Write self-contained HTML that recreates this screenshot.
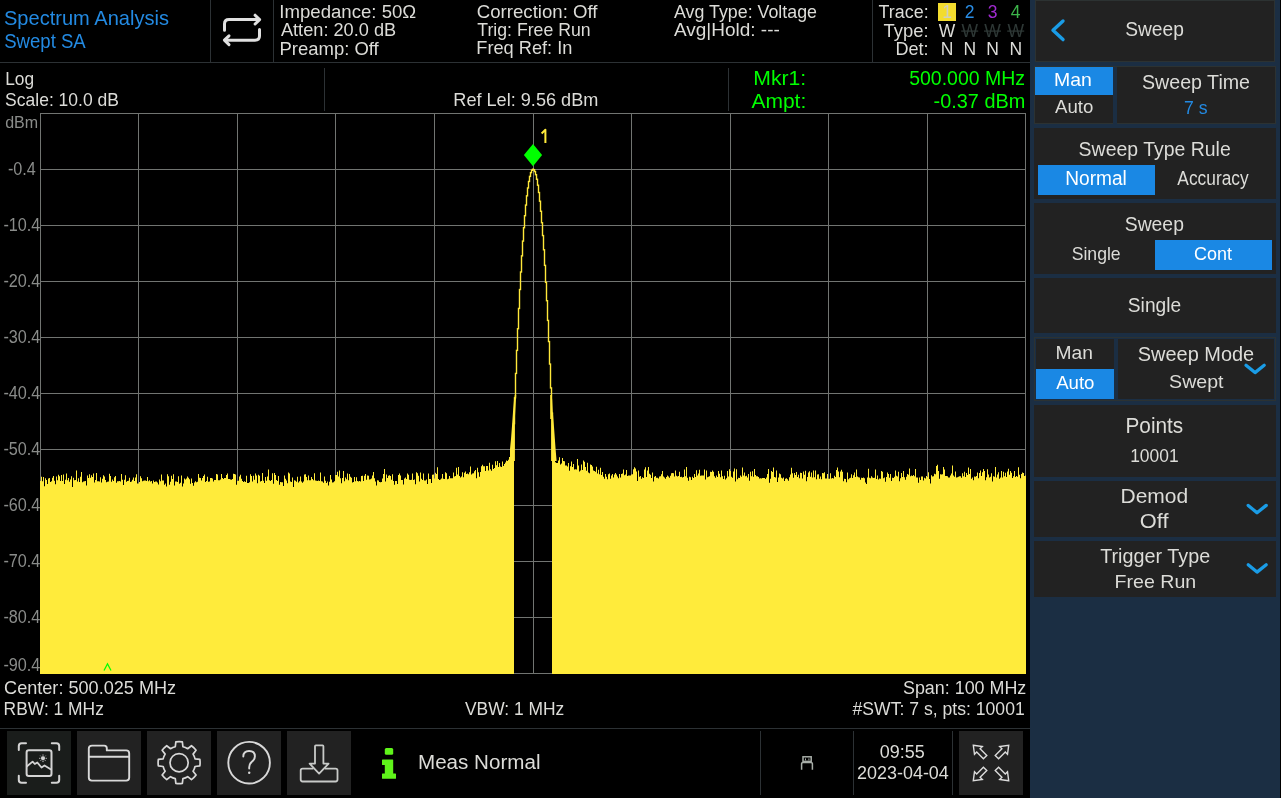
<!DOCTYPE html>
<html><head><meta charset="utf-8"><title>Spectrum Analysis - Swept SA</title>
<style>
html,body{margin:0;padding:0;background:#000;width:1281px;height:798px;overflow:hidden}
svg{display:block;will-change:transform}
text{font-family:"Liberation Sans",sans-serif}
</style></head><body>
<svg width="1281" height="798" viewBox="0 0 1281 798">
<rect x="0" y="0" width="1281" height="798" fill="#000"/>
<text x="4.00" y="25.00" font-size="20.06" fill="#238ae2" textLength="164.92" lengthAdjust="spacingAndGlyphs">Spectrum Analysis</text>
<text x="4.16" y="47.80" font-size="20.06" fill="#238ae2" textLength="81.58" lengthAdjust="spacingAndGlyphs">Swept SA</text>
<rect x="0" y="62" width="1030" height="1" fill="#2c3134"/>
<rect x="210" y="0" width="1" height="62" fill="#2c3134"/>
<rect x="273" y="0" width="1" height="62" fill="#2c3134"/>
<rect x="872" y="0" width="1" height="62" fill="#2c3134"/>
<g fill="none" stroke="#e0e0e0" stroke-width="3" stroke-linecap="round" stroke-linejoin="round"><path d="M224.5,30.3 V24 Q224.5,19.6 229,19.6 H258.5"/><path d="M255.1,15.2 L259.6,19.6 L255.1,24"/><path d="M259.5,29.5 V36 Q259.5,40.2 255,40.2 H225.5"/><path d="M229,35.8 L224.4,40.2 L229,44.6"/></g>
<text x="279.28" y="18.00" font-size="18.46" fill="#dcdcd8" textLength="137.02" lengthAdjust="spacingAndGlyphs">Impedance: 50Ω</text>
<text x="280.96" y="35.70" font-size="18.46" fill="#dcdcd8" textLength="115.19" lengthAdjust="spacingAndGlyphs">Atten: 20.0 dB</text>
<text x="279.49" y="54.90" font-size="18.46" fill="#dcdcd8" textLength="99.28" lengthAdjust="spacingAndGlyphs">Preamp: Off</text>
<text x="476.81" y="17.50" font-size="18.17" fill="#dcdcd8" textLength="120.67" lengthAdjust="spacingAndGlyphs">Correction: Off</text>
<text x="477.36" y="35.60" font-size="18.17" fill="#dcdcd8" textLength="113.18" lengthAdjust="spacingAndGlyphs">Trig: Free Run</text>
<text x="476.26" y="54.40" font-size="18.17" fill="#dcdcd8" textLength="96.18" lengthAdjust="spacingAndGlyphs">Freq Ref: In</text>
<text x="673.97" y="17.50" font-size="18.17" fill="#dcdcd8" textLength="143.06" lengthAdjust="spacingAndGlyphs">Avg Type: Voltage</text>
<text x="673.96" y="35.60" font-size="18.17" fill="#dcdcd8" textLength="105.88" lengthAdjust="spacingAndGlyphs">Avg|Hold: ---</text>
<text x="878.60" y="18.40" font-size="17.88" fill="#dcdcd8" textLength="50.01" lengthAdjust="spacingAndGlyphs">Trace:</text>
<text x="883.60" y="36.60" font-size="17.88" fill="#dcdcd8" textLength="45.05" lengthAdjust="spacingAndGlyphs">Type:</text>
<text x="895.52" y="54.60" font-size="17.88" fill="#dcdcd8" textLength="33.13" lengthAdjust="spacingAndGlyphs">Det:</text>
<rect x="938" y="3" width="18" height="18" fill="#f3dc2e"/>
<text x="947" y="18.4" font-size="17.5" fill="#cfcfbf" text-anchor="middle">1</text>
<text x="969.7" y="18.4" font-size="17.5" fill="#2a8ee6" text-anchor="middle">2</text>
<text x="992.5" y="18.4" font-size="17.5" fill="#a02ad0" text-anchor="middle">3</text>
<text x="1015.7" y="18.4" font-size="17.5" fill="#3cb54a" text-anchor="middle">4</text>
<text x="947" y="36.6" font-size="17.5" fill="#dcdcd8" text-anchor="middle">W</text>
<text x="969.7" y="36.6" font-size="17.5" fill="#2e3836" text-anchor="middle">W</text>
<rect x="961.2" y="30.5" width="17" height="1.2" fill="#2e3836"/>
<text x="992.5" y="36.6" font-size="17.5" fill="#2e3836" text-anchor="middle">W</text>
<rect x="984.0" y="30.5" width="17" height="1.2" fill="#2e3836"/>
<text x="1015.7" y="36.6" font-size="17.5" fill="#2e3836" text-anchor="middle">W</text>
<rect x="1007.2" y="30.5" width="17" height="1.2" fill="#2e3836"/>
<text x="947" y="54.6" font-size="17.5" fill="#dcdcd8" text-anchor="middle">N</text>
<text x="969.7" y="54.6" font-size="17.5" fill="#dcdcd8" text-anchor="middle">N</text>
<text x="992.5" y="54.6" font-size="17.5" fill="#dcdcd8" text-anchor="middle">N</text>
<text x="1015.7" y="54.6" font-size="17.5" fill="#dcdcd8" text-anchor="middle">N</text>
<text x="5.18" y="84.75" font-size="18.31" fill="#dcdcd8" textLength="28.94" lengthAdjust="spacingAndGlyphs">Log</text>
<text x="5.11" y="105.60" font-size="18.17" fill="#dcdcd8" textLength="113.82" lengthAdjust="spacingAndGlyphs">Scale: 10.0 dB</text>
<rect x="324" y="68" width="1" height="43" fill="#2c3134"/>
<rect x="728" y="68" width="1" height="43" fill="#2c3134"/>
<text x="453.31" y="106.00" font-size="18.60" fill="#dcdcd8" textLength="145.08" lengthAdjust="spacingAndGlyphs">Ref Lel: 9.56 dBm</text>
<text x="753.26" y="85.20" font-size="19.48" fill="#00ff00" textLength="52.97" lengthAdjust="spacingAndGlyphs">Mkr1:</text>
<text x="751.46" y="107.50" font-size="19.48" fill="#00ff00" textLength="54.76" lengthAdjust="spacingAndGlyphs">Ampt:</text>
<text x="909.22" y="84.50" font-size="19.48" fill="#00ff00" textLength="115.75" lengthAdjust="spacingAndGlyphs">500.000 MHz</text>
<text x="933.62" y="107.50" font-size="19.48" fill="#00ff00" textLength="91.69" lengthAdjust="spacingAndGlyphs">-0.37 dBm</text>
<path d="M40.5,113V674M138.5,113V674M237.5,113V674M335.5,113V674M434.5,113V674M533.5,113V674M631.5,113V674M730.5,113V674M828.5,113V674M927.5,113V674M1025.5,113V674M40,113.5H1026M40,169.5H1026M40,225.5H1026M40,281.5H1026M40,337.5H1026M40,393.5H1026M40,449.5H1026M40,505.5H1026M40,561.5H1026M40,617.5H1026M40,673.5H1026" stroke="#717471" stroke-width="1" fill="none"/>
<text x="5.13" y="127.90" font-size="16.57" fill="#8a8c8a" textLength="32.98" lengthAdjust="spacingAndGlyphs">dBm</text>
<text x="7.90" y="175.00" font-size="17.44" fill="#8a8c8a" textLength="27.95" lengthAdjust="spacingAndGlyphs">-0.4</text>
<text x="3.39" y="231.00" font-size="17.44" fill="#8a8c8a" textLength="36.97" lengthAdjust="spacingAndGlyphs">-10.4</text>
<text x="3.39" y="287.00" font-size="17.44" fill="#8a8c8a" textLength="36.97" lengthAdjust="spacingAndGlyphs">-20.4</text>
<text x="3.39" y="343.00" font-size="17.44" fill="#8a8c8a" textLength="36.97" lengthAdjust="spacingAndGlyphs">-30.4</text>
<text x="3.39" y="399.00" font-size="17.44" fill="#8a8c8a" textLength="36.97" lengthAdjust="spacingAndGlyphs">-40.4</text>
<text x="3.39" y="455.00" font-size="17.44" fill="#8a8c8a" textLength="36.97" lengthAdjust="spacingAndGlyphs">-50.4</text>
<text x="3.39" y="511.00" font-size="17.44" fill="#8a8c8a" textLength="36.97" lengthAdjust="spacingAndGlyphs">-60.4</text>
<text x="3.39" y="567.00" font-size="17.44" fill="#8a8c8a" textLength="36.97" lengthAdjust="spacingAndGlyphs">-70.4</text>
<text x="3.39" y="623.00" font-size="17.44" fill="#8a8c8a" textLength="36.97" lengthAdjust="spacingAndGlyphs">-80.4</text>
<text x="3.39" y="670.50" font-size="17.44" fill="#8a8c8a" textLength="36.97" lengthAdjust="spacingAndGlyphs">-90.4</text>
<path d="M40,674V481.1H41V476.7H42V481.3H43V477.1H44V486.2H45V478.2H46V480.1H47V484.1H48V478.4H49V478.1H50V481.9H51V481.2H52V477.7H53V476.0H54V480.8H55V484.2H56V476.6H57V480.3H58V474.7H59V476.2H60V480.9H61V475.0H62V481.0H63V474.4H64V484.1H65V479.7H66V473.4H67V480.2H68V478.0H69V481.8H70V479.5H71V476.2H72V486.9H73V477.8H74V480.3H75V480.1H76V470.4H77V481.6H78V478.3H79V482.0H80V476.8H81V471.9H82V482.3H83V481.5H84V481.3H85V481.1H86V485.4H87V475.4H88V478.0H89V474.2H90V477.7H91V475.2H92V477.1H93V473.5H94V482.6H95V479.9H96V472.9H97V481.2H98V481.3H99V481.5H100V477.2H101V482.6H102V478.8H103V475.3H104V476.4H105V480.1H106V482.2H107V481.7H108V481.5H109V473.7H110V476.1H111V481.7H112V479.6H113V480.9H114V477.3H115V476.1H116V482.7H117V481.2H118V481.3H119V481.0H120V481.4H121V473.9H122V479.8H123V484.9H124V479.7H125V475.2H126V481.7H127V481.1H128V480.8H129V477.8H130V481.9H131V481.5H132V479.8H133V477.5H134V481.0H135V477.4H136V474.3H137V483.6H138V483.5H139V482.1H140V476.3H141V478.3H142V481.2H143V480.8H144V480.4H145V480.5H146V481.0H147V477.0H148V481.2H149V480.3H150V481.6H151V481.1H152V483.5H153V480.5H154V482.1H155V481.4H156V481.4H157V482.5H158V484.6H159V479.6H160V481.3H161V474.4H162V480.5H163V480.5H164V484.8H165V483.5H166V486.5H167V474.3H168V476.3H169V484.7H170V481.7H171V475.8H172V479.1H173V474.2H174V485.5H175V481.5H176V481.6H177V482.1H178V476.2H179V483.7H180V482.7H181V475.5H182V486.4H183V483.4H184V478.5H185V479.4H186V478.4H187V476.4H188V477.8H189V479.2H190V483.8H191V478.4H192V482.9H193V485.7H194V482.4H195V481.3H196V482.2H197V481.8H198V473.9H199V477.8H200V478.0H201V480.4H202V478.0H203V476.0H204V474.5H205V482.0H206V481.1H207V476.8H208V481.8H209V481.5H210V477.9H211V478.0H212V478.4H213V481.6H214V479.9H215V480.0H216V474.0H217V474.5H218V480.3H219V480.2H220V479.4H221V474.0H222V478.0H223V478.9H224V478.0H225V478.1H226V474.9H227V473.5H228V478.9H229V479.0H230V479.4H231V479.8H232V479.0H233V473.7H234V474.1H235V474.6H236V484.8H237V480.9H238V480.8H239V476.4H240V474.8H241V478.7H242V481.0H243V482.1H244V481.2H245V481.9H246V475.8H247V483.1H248V483.0H249V482.2H250V474.2H251V475.9H252V481.5H253V475.8H254V479.7H255V473.5H256V475.4H257V483.3H258V474.8H259V475.7H260V481.5H261V480.9H262V473.1H263V480.8H264V483.0H265V477.1H266V480.7H267V476.5H268V469.6H269V480.3H270V481.1H271V479.9H272V473.3H273V483.7H274V473.0H275V475.1H276V479.9H277V480.9H278V475.9H279V484.8H280V482.1H281V482.2H282V482.2H283V486.0H284V475.5H285V478.8H286V480.4H287V483.2H288V472.5H289V473.4H290V481.4H291V482.0H292V477.6H293V487.1H294V480.2H295V480.8H296V481.7H297V476.7H298V482.5H299V481.3H300V476.4H301V481.6H302V482.7H303V481.6H304V474.4H305V474.3H306V477.0H307V480.2H308V475.6H309V480.3H310V480.2H311V477.1H312V478.9H313V480.3H314V473.2H315V480.5H316V480.7H317V481.0H318V480.4H319V481.0H320V472.6H321V481.2H322V481.6H323V482.8H324V476.5H325V480.7H326V482.9H327V481.4H328V485.5H329V481.8H330V475.1H331V479.5H332V482.5H333V482.2H334V481.3H335V474.9H336V475.1H337V471.8H338V476.4H339V470.5H340V478.3H341V483.3H342V478.1H343V470.9H344V481.3H345V477.5H346V479.3H347V473.5H348V480.3H349V473.9H350V476.8H351V477.8H352V482.6H353V481.9H354V477.0H355V481.2H356V477.3H357V481.1H358V481.4H359V480.9H360V481.4H361V475.9H362V475.8H363V480.9H364V475.8H365V474.1H366V479.8H367V475.4H368V475.7H369V479.4H370V479.2H371V478.5H372V475.4H373V472.0H374V478.2H375V481.6H376V485.5H377V480.2H378V480.5H379V482.0H380V482.2H381V482.1H382V478.6H383V474.1H384V469.1H385V481.4H386V474.5H387V478.0H388V475.7H389V475.2H390V476.1H391V479.7H392V474.2H393V481.0H394V484.7H395V480.9H396V481.1H397V483.9H398V475.0H399V473.6H400V475.6H401V479.9H402V480.0H403V484.6H404V478.6H405V477.6H406V478.9H407V473.6H408V474.8H409V479.8H410V480.1H411V479.8H412V473.5H413V479.9H414V479.5H415V484.2H416V472.3H417V473.3H418V475.7H419V481.5H420V472.4H421V478.8H422V480.0H423V473.6H424V480.4H425V480.6H426V479.6H427V484.1H428V473.5H429V479.1H430V479.1H431V482.9H432V474.8H433V474.6H434V478.6H435V472.7H436V473.9H437V467.2H438V479.0H439V479.9H440V479.5H441V478.4H442V474.0H443V478.7H444V479.0H445V472.2H446V473.3H447V479.3H448V478.7H449V476.1H450V478.3H451V478.3H452V478.2H453V472.4H454V476.6H455V476.0H456V467.7H457V474.5H458V467.1H459V475.9H460V477.6H461V476.5H462V472.2H463V477.2H464V472.8H465V471.4H466V474.0H467V473.6H468V474.3H469V472.2H470V466.4H471V474.4H472V473.6H473V473.2H474V471.3H475V470.0H476V478.2H477V467.8H478V472.2H479V476.7H480V471.9H481V466.3H482V464.7H483V466.3H484V466.3H485V471.0H486V465.9H487V466.0H488V470.4H489V462.8H490V469.2H491V470.8H492V464.8H493V469.0H494V468.0H495V461.3H496V465.3H497V461.1H498V467.0H499V462.9H500V466.4H501V467.1H502V461.6H503V466.1H504V464.0H505V462.4H506V460.6H507V461.1H508V459.7H509V456.9H510V459.7H511V456.6H512V453.0H513V458.0H514V674H552V459.5H553V459.0H554V451.3H555V462.3H556V463.0H557V462.9H558V460.6H559V457.3H560V464.4H561V463.4H562V458.0H563V461.0H564V461.3H565V465.6H566V465.4H567V466.5H568V463.1H569V470.8H570V466.3H571V461.6H572V466.9H573V463.9H574V469.5H575V469.2H576V469.4H577V459.0H578V465.6H579V471.4H580V470.5H581V464.4H582V470.0H583V460.5H584V461.8H585V467.1H586V470.7H587V462.7H588V472.5H589V473.2H590V464.6H591V465.1H592V466.6H593V470.5H594V471.1H595V471.7H596V466.7H597V473.4H598V469.8H599V474.2H600V467.7H601V475.0H602V472.1H603V476.7H604V478.7H605V474.0H606V476.7H607V479.2H608V474.3H609V473.4H610V478.8H611V475.5H612V474.1H613V477.5H614V474.5H615V472.9H616V474.5H617V476.6H618V478.3H619V474.1H620V477.5H621V474.1H622V473.5H623V469.5H624V475.2H625V474.5H626V469.9H627V476.0H628V475.5H629V475.5H630V475.4H631V474.6H632V474.3H633V469.2H634V467.2H635V468.6H636V471.4H637V480.9H638V470.4H639V476.8H640V476.0H641V478.7H642V477.2H643V477.9H644V469.4H645V467.3H646V477.1H647V470.5H648V467.0H649V473.7H650V474.8H651V477.9H652V472.6H653V481.5H654V476.7H655V476.0H656V477.7H657V477.8H658V478.4H659V476.4H660V476.2H661V474.3H662V470.9H663V476.4H664V477.4H665V478.7H666V477.0H667V475.4H668V476.4H669V477.8H670V475.8H671V473.3H672V472.9H673V473.3H674V476.5H675V470.4H676V475.7H677V476.4H678V476.0H679V471.7H680V476.9H681V476.8H682V477.6H683V477.0H684V469.5H685V476.2H686V467.0H687V477.7H688V480.8H689V476.8H690V477.3H691V480.1H692V476.7H693V477.9H694V474.0H695V476.9H696V470.3H697V475.4H698V473.4H699V469.7H700V475.8H701V475.6H702V475.4H703V475.4H704V469.6H705V479.6H706V470.6H707V477.2H708V476.8H709V476.3H710V471.8H711V472.0H712V470.5H713V471.7H714V476.2H715V477.7H716V475.5H717V477.0H718V470.9H719V473.7H720V477.2H721V470.4H722V476.2H723V479.1H724V475.8H725V479.5H726V478.3H727V471.0H728V476.5H729V469.2H730V471.1H731V476.8H732V477.7H733V471.6H734V468.5H735V481.6H736V469.2H737V479.3H738V477.8H739V478.1H740V475.4H741V476.8H742V467.5H743V475.5H744V472.4H745V476.2H746V475.8H747V477.4H748V474.0H749V480.8H750V471.7H751V476.2H752V471.2H753V476.7H754V469.0H755V475.1H756V476.3H757V476.3H758V476.9H759V478.4H760V478.3H761V478.6H762V477.9H763V477.9H764V477.9H765V478.9H766V477.5H767V474.1H768V469.1H769V482.7H770V478.7H771V471.1H772V472.0H773V467.5H774V477.1H775V477.4H776V470.4H777V481.9H778V477.5H779V473.4H780V474.2H781V477.7H782V478.4H783V477.5H784V481.0H785V478.7H786V478.3H787V479.2H788V480.7H789V477.3H790V474.5H791V467.8H792V473.2H793V477.7H794V473.1H795V474.9H796V472.1H797V477.0H798V474.8H799V478.3H800V472.8H801V472.9H802V478.4H803V471.6H804V474.8H805V470.7H806V481.2H807V477.0H808V472.6H809V471.2H810V476.8H811V472.6H812V477.6H813V470.6H814V477.3H815V470.6H816V479.2H817V474.6H818V474.3H819V478.8H820V476.5H821V479.2H822V472.9H823V473.3H824V472.2H825V478.5H826V478.5H827V473.9H828V478.8H829V478.7H830V473.2H831V478.4H832V478.0H833V478.4H834V475.7H835V477.1H836V470.0H837V467.5H838V471.6H839V477.2H840V471.6H841V469.7H842V471.7H843V481.3H844V478.7H845V479.1H846V482.2H847V472.5H848V479.3H849V478.3H850V477.8H851V474.3H852V478.1H853V475.3H854V472.6H855V477.1H856V469.6H857V476.4H858V477.2H859V477.5H860V479.8H861V477.8H862V478.0H863V477.4H864V478.2H865V482.5H866V483.9H867V477.6H868V468.7H869V477.8H870V478.3H871V476.2H872V477.6H873V477.9H874V477.7H875V469.6H876V478.9H877V475.5H878V479.6H879V478.4H880V478.7H881V471.1H882V471.8H883V478.3H884V477.4H885V481.8H886V477.0H887V472.6H888V474.0H889V477.8H890V474.1H891V480.9H892V477.8H893V477.9H894V476.8H895V470.6H896V475.7H897V476.6H898V471.8H899V481.2H900V478.2H901V472.9H902V476.9H903V471.1H904V477.3H905V479.7H906V476.7H907V474.0H908V474.7H909V468.4H910V476.3H911V475.6H912V476.1H913V475.1H914V476.2H915V468.9H916V477.5H917V477.4H918V482.7H919V477.6H920V480.1H921V476.4H922V476.4H923V480.4H924V477.7H925V478.4H926V476.1H927V476.9H928V472.3H929V478.9H930V483.4H931V475.2H932V476.6H933V476.3H934V473.7H935V474.2H936V465.9H937V464.7H938V471.1H939V478.7H940V474.2H941V474.5H942V474.3H943V466.9H944V469.5H945V476.1H946V476.0H947V476.3H948V477.6H949V477.4H950V475.4H951V473.6H952V465.6H953V475.5H954V476.8H955V471.4H956V477.6H957V477.3H958V476.8H959V476.3H960V476.3H961V477.7H962V473.3H963V476.2H964V471.8H965V476.9H966V473.1H967V475.0H968V467.5H969V473.9H970V469.1H971V478.8H972V477.5H973V480.2H974V476.4H975V476.7H976V475.9H977V472.6H978V478.3H979V473.1H980V470.4H981V476.1H982V472.3H983V469.0H984V470.9H985V480.3H986V477.2H987V469.2H988V474.4H989V477.4H990V476.7H991V473.3H992V481.5H993V476.3H994V476.8H995V466.9H996V477.4H997V474.4H998V472.3H999V478.8H1000V477.4H1001V471.0H1002V477.6H1003V471.8H1004V476.2H1005V472.8H1006V477.1H1007V471.5H1008V468.7H1009V474.8H1010V471.1H1011V472.7H1012V477.9H1013V476.3H1014V471.1H1015V476.9H1016V476.0H1017V476.7H1018V467.2H1019V474.8H1020V478.2H1021V473.9H1022V472.4H1023V472.9H1024V476.0H1025V475.5H1026V674Z" fill="#ffeb3b"/>
<g fill="#ffe83a"><rect x="511.80" y="450.15" width="1.4" height="12.55"/><rect x="512.80" y="422.96" width="1.4" height="28.59"/><rect x="513.80" y="397.16" width="1.4" height="27.21"/><rect x="514.80" y="372.73" width="1.4" height="25.83"/><rect x="515.80" y="349.68" width="1.4" height="24.45"/><rect x="516.80" y="328.02" width="1.4" height="23.07"/><rect x="517.80" y="307.73" width="1.4" height="21.69"/><rect x="518.80" y="288.83" width="1.4" height="20.31"/><rect x="519.80" y="271.30" width="1.4" height="18.93"/><rect x="520.80" y="255.15" width="1.4" height="17.55"/><rect x="521.80" y="240.39" width="1.4" height="16.17"/><rect x="522.80" y="227.00" width="1.4" height="14.79"/><rect x="523.80" y="215.00" width="1.4" height="13.41"/><rect x="524.80" y="204.37" width="1.4" height="12.03"/><rect x="525.80" y="195.12" width="1.4" height="10.65"/><rect x="526.80" y="187.26" width="1.4" height="9.27"/><rect x="527.80" y="180.77" width="1.4" height="7.89"/><rect x="528.80" y="175.67" width="1.4" height="6.51"/><rect x="529.80" y="171.94" width="1.4" height="5.13"/><rect x="530.80" y="169.59" width="1.4" height="3.75"/><rect x="531.80" y="168.63" width="1.4" height="2.37"/><rect x="532.80" y="168.60" width="1.4" height="1.84"/><rect x="533.80" y="169.04" width="1.4" height="3.19"/><rect x="534.80" y="170.84" width="1.4" height="4.57"/><rect x="535.80" y="174.01" width="1.4" height="5.95"/><rect x="536.80" y="178.56" width="1.4" height="7.33"/><rect x="537.80" y="184.50" width="1.4" height="8.71"/><rect x="538.80" y="191.81" width="1.4" height="10.09"/><rect x="539.80" y="200.51" width="1.4" height="11.47"/><rect x="540.80" y="210.58" width="1.4" height="12.85"/><rect x="541.80" y="222.03" width="1.4" height="14.23"/><rect x="542.80" y="234.87" width="1.4" height="15.61"/><rect x="543.80" y="249.08" width="1.4" height="16.99"/><rect x="544.80" y="264.68" width="1.4" height="18.37"/><rect x="545.80" y="281.65" width="1.4" height="19.75"/><rect x="546.80" y="300.00" width="1.4" height="21.13"/><rect x="547.80" y="319.74" width="1.4" height="22.51"/><rect x="548.80" y="340.85" width="1.4" height="23.89"/><rect x="549.80" y="363.35" width="1.4" height="25.27"/><rect x="550.80" y="387.22" width="1.4" height="26.65"/><rect x="551.80" y="412.47" width="1.4" height="28.03"/><rect x="552.80" y="439.11" width="1.4" height="23.59"/></g>
<polygon fill="#ffe83a" points="516.2,395 514.9,418 514.9,461 510,461 510,449 511,439 512,426 513.2,409 514,400 514.8,395"/>
<polygon fill="#ffe83a" points="550.2,395 550.2,419 551.1,419 551.1,461 556.6,461 555.5,448 554,427 552.8,412 552.2,400 551.7,395"/>
<polygon points="533,143.9 542.1,155.1 533,166.3 523.9,155.1" fill="#00ff00"/>
<path d="M545.4,143 V129.8 L541.6,133.4" fill="none" stroke="#ffeb3b" stroke-width="2" stroke-linejoin="round"/>
<polyline points="104,670.5 107.5,663.8 111,670.5" fill="none" stroke="#00ff00" stroke-width="1.3"/>
<text x="4.08" y="693.50" font-size="18.17" fill="#dcdcd8" textLength="172.02" lengthAdjust="spacingAndGlyphs">Center: 500.025 MHz</text>
<text x="3.58" y="714.50" font-size="17.59" fill="#dcdcd8" textLength="100.29" lengthAdjust="spacingAndGlyphs">RBW: 1 MHz</text>
<text x="464.92" y="714.60" font-size="18.46" fill="#dcdcd8" textLength="99.44" lengthAdjust="spacingAndGlyphs">VBW: 1 MHz</text>
<text x="902.99" y="693.50" font-size="17.88" fill="#dcdcd8" textLength="123.30" lengthAdjust="spacingAndGlyphs">Span: 100 MHz</text>
<text x="852.52" y="714.60" font-size="17.73" fill="#dcdcd8" textLength="172.23" lengthAdjust="spacingAndGlyphs">#SWT: 7 s, pts: 10001</text>
<rect x="0" y="728" width="1030" height="1" fill="#2c3134"/>
<rect x="7" y="731" width="64" height="64" fill="#1a1d1b"/>
<rect x="77" y="731" width="64" height="64" fill="#222222"/>
<rect x="147" y="731" width="64" height="64" fill="#222222"/>
<rect x="217" y="731" width="64" height="64" fill="#222222"/>
<rect x="287" y="731" width="64" height="64" fill="#222222"/>
<g transform="translate(7,731)" fill="none" stroke="#d4d4d4" stroke-width="2" stroke-linecap="round" stroke-linejoin="round"><path d="M11.8,19 V15 Q11.8,12.2 14.6,12.2 H19"/><path d="M44.8,12.2 H49.4 Q52.2,12.2 52.2,15 V19"/><path d="M11.8,44.8 V49 Q11.8,51.8 14.6,51.8 H19"/><path d="M44.8,51.8 H49.4 Q52.2,51.8 52.2,49 V44.8"/><rect x="19.6" y="19.2" width="24.9" height="25.7" rx="2.2"/><path d="M20,35.3 L25.6,30.6 L27.8,33 L30.3,31.5 L34.5,36.5 L37.5,34.4 L44,38.4" stroke-width="1.8"/></g>
<g transform="translate(7,731)" stroke="#d4d4d4" stroke-width="1" fill="none"><circle cx="36" cy="27.3" r="1.6" fill="#d4d4d4"/><path d="M36,23.5V24.6M36,30V31.1M32.2,27.3H33.3M38.7,27.3H39.8M33.4,24.7l0.7,0.7M37.9,29.2l0.7,0.7M38.6,24.7l-0.7,0.7M34.1,29.2l-0.7,0.7"/></g>
<g transform="translate(77,731)" fill="none" stroke="#d8d8d8" stroke-width="1.9" stroke-linejoin="round"><path d="M15,14.6 H27.2 Q29.8,14.6 29.8,17.2 V19.4 H49.2 Q52.2,19.4 52.2,22.4 V46.6 Q52.2,49.6 49.2,49.6 H14.8 Q11.8,49.6 11.8,46.6 V17.6 Q11.8,14.6 15,14.6 Z"/><path d="M11.8,25.8 H52.2"/></g>
<g transform="translate(147,731)" fill="none" stroke="#d8d8d8" stroke-width="1.7" stroke-linejoin="round"><path d="M28.28,15.75L28.86,10.95A21.0,21.0 0 0 1 35.34,10.95L35.92,15.75A16.4,16.4 0 0 1 40.68,17.72L44.48,14.74A21.0,21.0 0 0 1 49.06,19.32L46.08,23.12A16.4,16.4 0 0 1 48.05,27.88L52.85,28.46A21.0,21.0 0 0 1 52.85,34.94L48.05,35.52A16.4,16.4 0 0 1 46.08,40.28L49.06,44.08A21.0,21.0 0 0 1 44.48,48.66L40.68,45.68A16.4,16.4 0 0 1 35.92,47.65L35.34,52.45A21.0,21.0 0 0 1 28.86,52.45L28.28,47.65A16.4,16.4 0 0 1 23.52,45.68L19.72,48.66A21.0,21.0 0 0 1 15.14,44.08L18.12,40.28A16.4,16.4 0 0 1 16.15,35.52L11.35,34.94A21.0,21.0 0 0 1 11.35,28.46L16.15,27.88A16.4,16.4 0 0 1 18.12,23.12L15.14,19.32A21.0,21.0 0 0 1 19.72,14.74L23.52,17.72A16.4,16.4 0 0 1 28.28,15.75Z"/><circle cx="32.1" cy="31.7" r="9.1"/></g>
<g transform="translate(217,731)" fill="none" stroke="#d8d8d8" stroke-width="1.9" stroke-linecap="round"><circle cx="32.1" cy="31.7" r="20.8"/><path d="M26.3,25.6 Q26.3,20 32.1,20 Q37.9,20 37.9,25.4 Q37.9,28.4 34.6,31 Q32.2,33 32.2,36.2 V37.6"/><circle cx="32.2" cy="41.8" r="1.2" fill="#d8d8d8" stroke="none"/></g>
<g transform="translate(287,731)" fill="none" stroke="#c8cac8" stroke-width="1.8" stroke-linejoin="round"><path d="M26.4,37.6 H15.6 Q13.7,37.6 13.7,39.5 V48.6 Q13.7,50.5 15.6,50.5 H48.6 Q50.5,50.5 50.5,48.6 V39.5 Q50.5,37.6 48.6,37.6 H37.8"/><path d="M28,32.6 V15.2 Q28,14.4 28.8,14.4 H35.6 Q36.4,14.4 36.4,15.2 V32.6 H41.6 L32.1,42.6 L22.6,32.6 Z"/></g>
<g fill="#5ff41a"><rect x="384.8" y="748" width="8.4" height="6.8" rx="1.5"/><path d="M383.4,759.5 H392.6 Q393.2,759.5 393.2,760.1 V773.4 H395.4 Q396,773.4 396,774 V778.2 Q396,778.8 395.4,778.8 H382.6 Q382,778.8 382,778.2 V774 Q382,773.4 382.6,773.4 H384.8 V765 H382.6 Q382,765 382,764.4 V760.1 Q382,759.5 382.6,759.5 Z"/></g>
<text x="418.01" y="769.10" font-size="20.35" fill="#dcdcd8" textLength="122.47" lengthAdjust="spacingAndGlyphs">Meas Normal</text>
<rect x="760" y="731" width="1" height="64" fill="#2c3134"/>
<rect x="853" y="731" width="1" height="64" fill="#2c3134"/>
<rect x="952" y="731" width="1" height="64" fill="#2c3134"/>
<g fill="none" stroke="#a8aea8" stroke-width="1.5"><rect x="803" y="756.8" width="8.2" height="4.6"/><path d="M801.6,769.8 V763.8 Q801.6,762.4 803,762.4 H811 Q812.4,762.4 812.4,763.8 V769.8"/></g><g fill="#a8aea8"><rect x="805" y="758.4" width="1" height="2"/><rect x="808.4" y="758.4" width="1" height="2"/></g>
<text x="879.80" y="757.80" font-size="18.46" fill="#dcdcd8" textLength="44.96" lengthAdjust="spacingAndGlyphs">09:55</text>
<text x="857.00" y="778.80" font-size="18.46" fill="#dcdcd8" textLength="91.83" lengthAdjust="spacingAndGlyphs">2023-04-04</text>
<rect x="959" y="731" width="64" height="64" fill="#222222"/>
<g transform="translate(959,731)" fill="none" stroke="#dcdcdc" stroke-width="1.4" stroke-linejoin="miter"><path d="M14.3,14.3 L23.3,15.5 L21.1,17.7 L27.8,24.4 L24.4,27.8 L17.7,21.1 L15.5,23.3 Z"/><path d="M14.3,14.3 L23.3,15.5 L21.1,17.7 L27.8,24.4 L24.4,27.8 L17.7,21.1 L15.5,23.3 Z" transform="rotate(90 32 32)"/><path d="M14.3,14.3 L23.3,15.5 L21.1,17.7 L27.8,24.4 L24.4,27.8 L17.7,21.1 L15.5,23.3 Z" transform="rotate(180 32 32)"/><path d="M14.3,14.3 L23.3,15.5 L21.1,17.7 L27.8,24.4 L24.4,27.8 L17.7,21.1 L15.5,23.3 Z" transform="rotate(270 32 32)"/></g>
<rect x="1030" y="0" width="250" height="798" fill="#1b2e43"/>
<rect x="1280" y="0" width="1" height="798" fill="#000"/>
<rect x="1035" y="0" width="240" height="62" fill="#2c3232"/>
<rect x="1036" y="1" width="238" height="60" fill="#222222"/>
<path d="M1063,21 L1053,30.3 L1063,39.6" fill="none" stroke="#1a9ce6" stroke-width="3.4" stroke-linecap="round" stroke-linejoin="round"/>
<text x="1125.13" y="35.90" font-size="20.06" fill="#dcdcd8" textLength="58.68" lengthAdjust="spacingAndGlyphs">Sweep</text>
<rect x="1034" y="66" width="242" height="58" fill="#2c3232"/>
<rect x="1035" y="67" width="240" height="56" fill="#222222"/>
<rect x="1035" y="67" width="78" height="28" fill="#1a88e4"/>
<rect x="1113" y="67" width="4" height="57" fill="#1b2e43"/>
<text x="1054.10" y="86.00" font-size="18.17" fill="#ffffff" textLength="37.86" lengthAdjust="spacingAndGlyphs">Man</text>
<text x="1055.06" y="113.40" font-size="18.02" fill="#dcdcd8" textLength="38.32" lengthAdjust="spacingAndGlyphs">Auto</text>
<text x="1141.92" y="88.90" font-size="19.62" fill="#dcdcd8" textLength="108.15" lengthAdjust="spacingAndGlyphs">Sweep Time</text>
<text x="1184.00" y="113.80" font-size="19.04" fill="#238ae2" textLength="23.54" lengthAdjust="spacingAndGlyphs">7 s</text>
<rect x="1034" y="128" width="242" height="71" fill="#222222"/>
<rect x="1038" y="165" width="117" height="30" fill="#1a88e4"/>
<text x="1078.62" y="156.10" font-size="19.91" fill="#dcdcd8" textLength="152.13" lengthAdjust="spacingAndGlyphs">Sweep Type Rule</text>
<text x="1065.33" y="184.80" font-size="19.33" fill="#ffffff" textLength="61.54" lengthAdjust="spacingAndGlyphs">Normal</text>
<text x="1177.37" y="184.80" font-size="19.33" fill="#dcdcd8" textLength="71.27" lengthAdjust="spacingAndGlyphs">Accuracy</text>
<rect x="1034" y="203" width="242" height="71" fill="#222222"/>
<rect x="1155" y="240" width="117" height="30" fill="#1a88e4"/>
<text x="1124.72" y="231.10" font-size="19.91" fill="#dcdcd8" textLength="59.19" lengthAdjust="spacingAndGlyphs">Sweep</text>
<text x="1071.70" y="259.80" font-size="18.60" fill="#dcdcd8" textLength="48.98" lengthAdjust="spacingAndGlyphs">Single</text>
<text x="1193.99" y="259.80" font-size="18.60" fill="#ffffff" textLength="37.94" lengthAdjust="spacingAndGlyphs">Cont</text>
<rect x="1034" y="278" width="242" height="55" fill="#222222"/>
<text x="1127.83" y="312.10" font-size="20.93" fill="#dcdcd8" textLength="53.32" lengthAdjust="spacingAndGlyphs">Single</text>
<rect x="1034" y="337" width="242" height="64" fill="#2c3232"/>
<rect x="1035" y="338" width="240" height="62" fill="#222222"/>
<rect x="1035" y="338" width="240" height="62" fill="#1b2e43"/>
<rect x="1036" y="339" width="78" height="60" fill="#222222"/>
<rect x="1036" y="369" width="78" height="30" fill="#1a88e4"/>
<rect x="1118" y="339" width="156" height="60" fill="#222222"/>
<text x="1055.42" y="359.10" font-size="18.46" fill="#dcdcd8" textLength="37.43" lengthAdjust="spacingAndGlyphs">Man</text>
<text x="1056.16" y="389.10" font-size="18.60" fill="#ffffff" textLength="38.32" lengthAdjust="spacingAndGlyphs">Auto</text>
<text x="1137.79" y="361.00" font-size="19.91" fill="#dcdcd8" textLength="116.39" lengthAdjust="spacingAndGlyphs">Sweep Mode</text>
<text x="1169.11" y="388.00" font-size="18.31" fill="#dcdcd8" textLength="54.43" lengthAdjust="spacingAndGlyphs">Swept</text>
<path d="M1246,365.2 L1255,372.6 L1264.2,365.2" fill="none" stroke="#1a9ce6" stroke-width="3.3" stroke-linecap="round" stroke-linejoin="round"/>
<rect x="1034" y="405" width="242" height="72" fill="#222222"/>
<text x="1125.50" y="433.10" font-size="21.22" fill="#dcdcd8" textLength="57.76" lengthAdjust="spacingAndGlyphs">Points</text>
<text x="1130.17" y="461.80" font-size="19.19" fill="#dcdcd8" textLength="48.48" lengthAdjust="spacingAndGlyphs">10001</text>
<rect x="1034" y="481" width="242" height="56" fill="#222222"/>
<text x="1120.48" y="503.10" font-size="20.64" fill="#dcdcd8" textLength="67.68" lengthAdjust="spacingAndGlyphs">Demod</text>
<text x="1139.88" y="527.50" font-size="20.78" fill="#dcdcd8" textLength="28.69" lengthAdjust="spacingAndGlyphs">Off</text>
<path d="M1248.2,505.4 L1257,512.8 L1266.2,505.4" fill="none" stroke="#1a9ce6" stroke-width="3.3" stroke-linecap="round" stroke-linejoin="round"/>
<rect x="1034" y="541" width="242" height="56" fill="#222222"/>
<text x="1100.16" y="562.90" font-size="20.49" fill="#dcdcd8" textLength="110.00" lengthAdjust="spacingAndGlyphs">Trigger Type</text>
<text x="1114.59" y="587.80" font-size="19.04" fill="#dcdcd8" textLength="81.58" lengthAdjust="spacingAndGlyphs">Free Run</text>
<path d="M1248.2,564.7 L1257,572.1 L1266.2,564.7" fill="none" stroke="#1a9ce6" stroke-width="3.3" stroke-linecap="round" stroke-linejoin="round"/>
</svg>
</body></html>
